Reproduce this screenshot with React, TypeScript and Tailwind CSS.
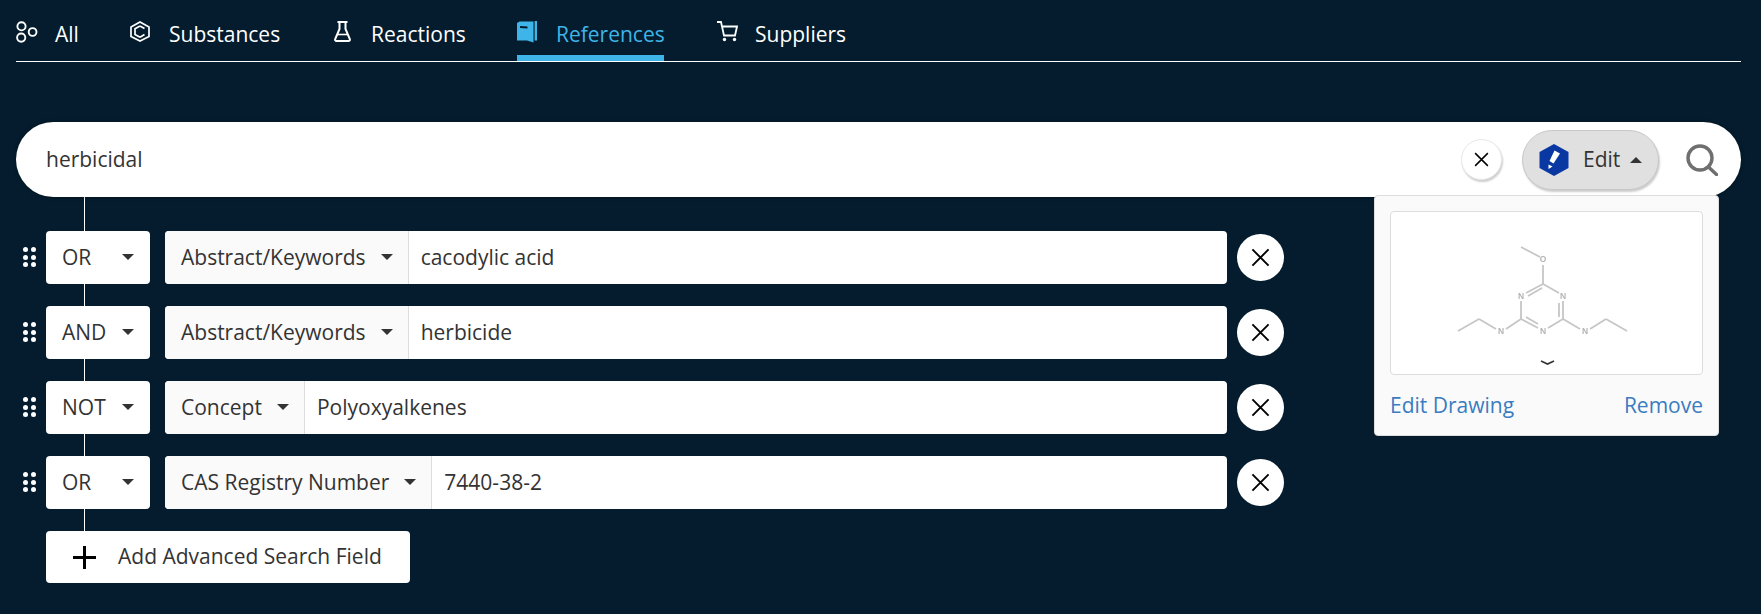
import React from "react";

function TabIconAll() {
  return (
    <svg width="22" height="22" viewBox="0 0 22 22" fill="none" stroke="currentColor" strokeWidth="1.9">
      <circle cx="5.5" cy="5.3" r="4.1" />
      <circle cx="5.2" cy="16.6" r="4.1" />
      <circle cx="16.6" cy="11" r="3.9" />
    </svg>
  );
}
function TabIconSubstance() {
  return (
    <svg width="20" height="21" viewBox="0 0 20 21" fill="none" stroke="currentColor" strokeWidth="1.7">
      <path d="M10 1 L19 6 V15.5 L10 20 L1 15.5 V6 Z" />
      <path d="M10 5 L5 7.8 V13.5 L10 16.2 M10 5 L14.5 7.6 M14.5 13.5 L10 16.2" />
    </svg>
  );
}
function TabIconFlask() {
  return (
    <svg width="17" height="21" viewBox="0 0 17 21" fill="none" stroke="currentColor" strokeWidth="2">
      <path d="M3.5 1 H13.5 M5.5 1 V8 L1.2 18 Q0.8 20 2.5 20 H14.5 Q16.2 20 15.8 18 L11.5 8 V1" />
      <path d="M3.5 13.5 H13.5" strokeWidth="1.6" />
    </svg>
  );
}
function TabIconBook() {
  return (
    <svg width="21" height="22" viewBox="0 0 21 22">
      <path d="M0 2 L2.5 0.5 H16.5 V21.5 L10 19.5 H0 Z" fill="#3fb4e8" />
      <path d="M17.6 0 H20 V19.5 H17.6 Z" fill="#3fb4e8" />
      <path d="M3 5 L10.5 5.6 V7.6 L3 7 Z" fill="#041c2d" />
    </svg>
  );
}
function TabIconCart() {
  return (
    <svg width="21" height="21" viewBox="0 0 21 21" fill="none" stroke="currentColor" strokeWidth="1.8">
      <path d="M0 1 H4 L7 14.5 H18 L20 5.5 H5" />
      <circle cx="7.5" cy="18.5" r="1.7" fill="currentColor" stroke="none" />
      <circle cx="17.5" cy="18.5" r="1.7" fill="currentColor" stroke="none" />
    </svg>
  );
}

function Caret({ className = "" }: { className?: string }) {
  return (
    <span className={`inline-block w-0 h-0 border-x-[6px] border-x-transparent border-t-[6px] border-t-[#333] ${className}`} />
  );
}

function DragDots() {
  return (
    <div className="grid grid-cols-2 gap-x-[3px] gap-y-[2.5px] w-[13px]">
      {[0, 1, 2, 3, 4, 5].map((i) => (
        <span key={i} className="block w-[5px] h-[5px] rounded-full bg-white" />
      ))}
    </div>
  );
}

function CloseX({ size, width }: { size: number; width: number }) {
  return (
    <svg width={size} height={size} viewBox="0 0 20 20" stroke="#000" strokeWidth={width} fill="none">
      <path d="M1.5 1.5 L18.5 18.5 M18.5 1.5 L1.5 18.5" />
    </svg>
  );
}

type Row = { op: string; field: string; value: string };
const rows: Row[] = [
  { op: "OR", field: "Abstract/Keywords", value: "cacodylic acid" },
  { op: "AND", field: "Abstract/Keywords", value: "herbicide" },
  { op: "NOT", field: "Concept", value: "Polyoxyalkenes" },
  { op: "OR", field: "CAS Registry Number", value: "7440-38-2" },
];

function Molecule() {
  const g = "#c6c6c6";
  const bonds = [
    [66, 35, 85, 45],
    [88, 53, 88, 72],
    [88, 72, 104, 81],
    [108, 89, 108, 107],
    [108, 107, 93, 116],
    [83, 116, 66, 107],
    [66, 107, 66, 89],
    [71, 81, 88, 72],
    [73, 84, 87, 76],
    [71, 105, 83, 112],
    [104, 91, 104, 105],
    [66, 107, 51, 117],
    [41, 117, 24, 107],
    [24, 107, 3, 119],
    [108, 107, 125, 117],
    [135, 117, 151, 107],
    [151, 107, 172, 119],
  ];
  const labels: [string, number, number][] = [
    ["O", 88, 47],
    ["N", 66, 84],
    ["N", 108, 84],
    ["N", 88, 119],
    ["N", 46, 119],
    ["N", 130, 119],
  ];
  return (
    <svg width="180" height="130" viewBox="0 0 180 130" className="blur-[0.5px]">
      {bonds.map((b, i) => (
        <line key={i} x1={b[0]} y1={b[1]} x2={b[2]} y2={b[3]} stroke={g} strokeWidth="1.8" />
      ))}
      {labels.map(([t, x, y], i) => (
        <text key={i} x={x} y={y + 3} textAnchor="middle" fontSize="8.5" fontWeight="700" fill="#b4b4b4" fontFamily="Liberation Sans, sans-serif">
          {t}
        </text>
      ))}
    </svg>
  );
}

export default function App() {
  return (
    <div className="w-[1761px] h-[614px] bg-[#041c2d] pl-4 pr-5 overflow-hidden font-['Open_Sans',sans-serif] text-[21px] text-[#333]">
      <nav className="flex h-[62px] border-b border-white text-white">
        <a className="flex items-center h-[61px] w-[114px] gap-[17px]">
          <span className="mt-[2px]"><TabIconAll /></span>
          <span className="mt-[9px]">All</span>
        </a>
        <a className="flex items-center h-[61px] w-[204px] gap-[19px]">
          <span className="mt-[2px]"><TabIconSubstance /></span>
          <span className="mt-[9px]">Substances</span>
        </a>
        <a className="flex items-center h-[61px] w-[183px] gap-[20px]">
          <span className="mt-[2px]"><TabIconFlask /></span>
          <span className="mt-[9px]">Reactions</span>
        </a>
        <a className="flex items-center h-[61px] w-[147px] gap-[18px] text-[#3fb4e8] border-b-[6px] border-[#3fb4e8] mr-[53px]">
          <span className="mt-[8px]"><TabIconBook /></span>
          <span className="mt-[15px]">References</span>
        </a>
        <a className="flex items-center h-[61px] gap-[17px]">
          <span className="mt-[2px]"><TabIconCart /></span>
          <span className="mt-[9px]">Suppliers</span>
        </a>
      </nav>

      <div className="relative mt-[60px]">
        <div className="absolute left-[68px] top-[60px] w-px h-[360px] bg-white" />

        <div className="relative flex items-center h-[75px] rounded-full bg-white pl-[30px] pr-[23px] shadow-[0_0_4px_rgba(0,0,0,0.3)]">
          <span className="flex-1">herbicidal</span>
          <button className="flex items-center justify-center w-[41px] h-[41px] rounded-full bg-white border border-[#e8e8e8] shadow-[1px_2px_2px_rgba(0,0,0,0.2)] mr-5">
            <CloseX size={15} width={2} />
          </button>
          <button className="flex items-center w-[137px] h-[60px] rounded-full bg-[#e0e0e0] border border-[#c8c8c8] shadow-[1px_2px_2px_rgba(0,0,0,0.2)] pl-4 mr-[27px]">
            <svg width="30" height="32" viewBox="0 0 30 32">
              <path d="M15 0 L29.5 8 V24 L15 32 L0.5 24 V8 Z" fill="#0a38a3" />
              <path d="M15.5 6.5 L21 9.5 L14.5 19.5 L10.5 17 Z" fill="#fff" />
              <path d="M9.5 20.5 L13.5 22.5 L9.5 25 Z" fill="#fff" />
            </svg>
            <span className="ml-[14px]">Edit</span>
            <Caret className="ml-[10px] rotate-180" />
          </button>
          <svg width="32" height="32" viewBox="0 0 32 32" fill="none" stroke="#6f6f6f" strokeWidth="3.4">
            <circle cx="14" cy="14" r="12" />
            <path d="M22.5 23 L30.5 30.5" strokeLinecap="round" />
          </svg>
        </div>

        <div className="absolute left-[1358px] top-[73px] w-[345px] h-[241px] bg-[#fafafa] border border-[#ddd] rounded-[4px] p-[15px] z-10">
          <div className="relative h-[164px] bg-white border border-[#ddd] rounded-[4px] flex justify-center">
            <div className="ml-[-4px]">
              <Molecule />
            </div>
            <svg className="absolute left-[149px] top-[148px]" width="15" height="6" viewBox="0 0 15 6" fill="none" stroke="#333" strokeWidth="1.6">
              <path d="M1 1 L7.5 4 L14 1" />
            </svg>
          </div>
          <div className="flex justify-between mt-[15px] text-[#3a7cc0]">
            <a>Edit Drawing</a>
            <a>Remove</a>
          </div>
        </div>

        <div className="relative flex flex-col gap-[22.5px] mt-[34px]">
          {rows.map((r, i) => (
            <div key={i} className="flex items-center h-[52.5px]">
              <div className="ml-[6.5px] mr-[10.5px]">
                <DragDots />
              </div>
              <div className="flex items-center justify-between w-[104px] h-full bg-white rounded-[4px] pl-4 pr-[16px] mr-[15px]">
                <span>{r.op}</span>
                <Caret />
              </div>
              <div className="flex items-center w-[1062px] h-full bg-white rounded-[4px] overflow-hidden">
                <div className="flex items-center h-full bg-[#fafafa] border-r border-[#ddd] pl-4 pr-[15px] gap-[15px]">
                  <span>{r.field}</span>
                  <Caret />
                </div>
                <span className="pl-[12px]">{r.value}</span>
              </div>
              <button className="flex items-center justify-center w-[47px] h-[47px] rounded-full bg-white ml-[10px]">
                <CloseX size={19} width={2} />
              </button>
            </div>
          ))}
          <div className="flex items-center ml-[30px] w-[364px] h-[52px] bg-white rounded-[4px] pl-[27px] gap-[22px]">
            <svg width="23" height="23" viewBox="0 0 23 23" stroke="#000" strokeWidth="3" fill="none">
              <path d="M11.5 0 V23 M0 11.5 H23" />
            </svg>
            <span>Add Advanced Search Field</span>
          </div>
        </div>
      </div>
    </div>
  );
}
